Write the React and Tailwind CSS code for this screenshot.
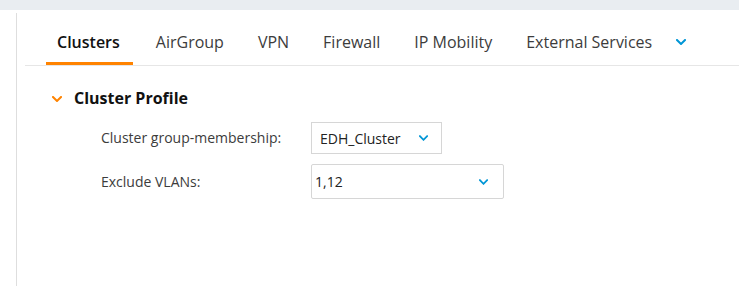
import React from 'react';

const Chevron = ({ className = '', w = 9, h = 6 }) => (
  <svg width={w} height={h} viewBox="0 0 10 6" className={className} fill="none">
    <path d="M1 1l4 4 4-4" stroke="currentColor" strokeWidth="2" strokeLinecap="square" />
  </svg>
);

const tabs = ['Clusters', 'AirGroup', 'VPN', 'Firewall', 'IP Mobility', 'External Services'];

export default function App() {
  return (
    <div className="w-[739px] h-[286px] bg-white overflow-hidden" style={{ fontFamily: '"Open Sans", "Liberation Sans", sans-serif' }}>
      {/* top strip */}
      <div className="h-[10px] bg-[#e9edf1]" />

      <div className="mt-[3px] ml-[16px] h-[273px] border-l border-[#dedede]">
        {/* tabs */}
        <div className="ml-[8px] flex items-end pl-[21px] border-b border-[#e6e6e6]">
          {tabs.map((t, i) => (
            <div
              key={t}
              className={`pt-[18px] pb-[9px] px-[11px] mr-[12px] text-[16px] leading-[22px] border-b-[3px] ${
                i === 0 ? 'border-[#ff8300] font-semibold text-[#111] pr-[13px] mr-[11px]' : 'border-transparent text-[#3c3c3c]'
              }`}
            >
              {t}
            </div>
          ))}
          <div className="self-stretch flex items-start pt-[26px] pl-[1px]">
            <Chevron className="text-[#0096d6]" w={10} h={6} />
          </div>
        </div>

        {/* section */}
        <div className="pl-[35px] pt-[21px]">
          <div className="flex items-center gap-[12px]">
            <Chevron className="text-[#ff8300] mt-[1px]" w={10} h={6} />
            <span className="text-[16px] leading-[22px] font-bold text-[#111]">Cluster Profile</span>
          </div>

          <div className="pl-[49px] pt-[13px] flex flex-col gap-[10px] text-[14px] text-[#3c3c3c]">
            <div className="flex items-center">
              <span className="w-[210px] leading-[20px]">Cluster group-membership:</span>
              <div className="w-[131px] h-[32px] border border-[#d6d6d6] flex items-center pl-[8px] pr-[13px] justify-between text-[#222]">
                <span>EDH_Cluster</span>
                <Chevron className="text-[#0096d6]" w={9} h={6} />
              </div>
            </div>
            <div className="flex items-center">
              <span className="w-[210px] leading-[20px]">Exclude VLANs:</span>
              <div className="w-[193px] h-[35px] border border-[#d6d6d6] rounded-[2px] flex items-center pl-[3px] pr-[15px] justify-between text-[#222]">
                <span>1,12</span>
                <Chevron className="text-[#0096d6]" w={9} h={6} />
              </div>
            </div>
          </div>
        </div>
      </div>
    </div>
  );
}
